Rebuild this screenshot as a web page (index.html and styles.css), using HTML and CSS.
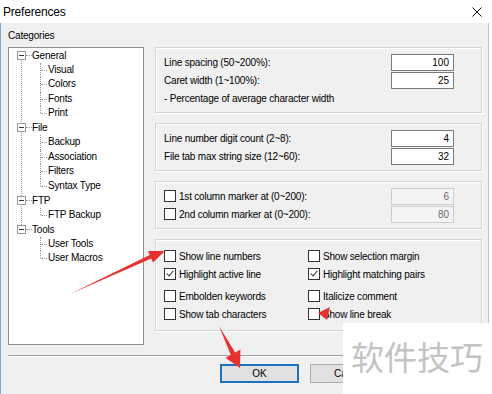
FILE: index.html
```html
<!DOCTYPE html>
<html lang="en">
  <head>
    <meta charset="UTF-8" />
    <title>Preferences</title>
    <link rel="stylesheet" href="styles.css">
  </head>
  <body>
    <div class="window">
      <div class="titlebar">
        <span class="title">Preferences</span>
        <svg class="close" width="10" height="10" viewBox="0 0 10 10">
          <path d="M0.5 0.5 L9.5 9.5 M9.5 0.5 L0.5 9.5" stroke="#111" stroke-width="1" fill="none" />
        </svg>
      </div>

      <div class="dialog">
        <div class="cat-label">Categories</div>
        <div class="main">
          <ul class="tree">
            <li>
              <div class="row"><span class="expander"></span><span>General</span></div>
              <ul class="children">
                <li>Visual</li>
                <li>Colors</li>
                <li>Fonts</li>
                <li>Print</li>
              </ul>
            </li>
            <li>
              <div class="row"><span class="expander"></span><span>File</span></div>
              <ul class="children">
                <li>Backup</li>
                <li>Association</li>
                <li>Filters</li>
                <li>Syntax Type</li>
              </ul>
            </li>
            <li>
              <div class="row"><span class="expander"></span><span>FTP</span></div>
              <ul class="children">
                <li>FTP Backup</li>
              </ul>
            </li>
            <li>
              <div class="row"><span class="expander"></span><span>Tools</span></div>
              <ul class="children">
                <li>User Tools</li>
                <li>User Macros</li>
              </ul>
            </li>
          </ul>

          <div class="options">
            <div class="group">
              <div class="field"><span>Line spacing (50~200%):</span><input class="num" type="text" value="100"></div>
              <div class="field"><span>Caret width (1~100%):</span><input class="num" type="text" value="25"></div>
              <div class="field"><span>- Percentage of average character width</span></div>
            </div>

            <div class="group">
              <div class="field"><span>Line number digit count (2~8):</span><input class="num" type="text" value="4"></div>
              <div class="field"><span>File tab max string size (12~60):</span><input class="num" type="text" value="32"></div>
            </div>

            <div class="group">
              <div class="field"><label class="check"><span class="box"></span>1st column marker at (0~200):</label><input class="num" type="text" value="6" disabled></div>
              <div class="field"><label class="check"><span class="box"></span>2nd column marker at (0~200):</label><input class="num" type="text" value="80" disabled></div>
            </div>

            <div class="group flags">
              <label class="check"><span class="box"></span>Show line numbers</label>
              <label class="check"><span class="box"></span>Show selection margin</label>
              <label class="check"><span class="box checked"></span>Highlight active line</label>
              <label class="check"><span class="box checked"></span>Highlight matching pairs</label>
              <label class="check gap"><span class="box"></span>Embolden keywords</label>
              <label class="check gap"><span class="box"></span>Italicize comment</label>
              <label class="check"><span class="box"></span>Show tab characters</label>
              <label class="check"><span class="box"></span>Show line break</label>
            </div>
          </div>
        </div>

        <div class="separator"></div>

        <div class="buttons">
          <button type="button" class="btn default">OK</button>
          <button type="button" class="btn">Cancel</button>
        </div>
      </div>

      <!-- red annotation arrows drawn over the dialog -->
      <svg class="marks" width="492" height="394" viewBox="0 0 492 394">
        <polygon fill="#e8312f" points="70,294 151.3,258.5 153,262.5 165,251 148,251 149.7,254.9" />
        <polygon fill="#e8312f" points="219,326 230.8,354.9 225.5,357.8 240,368 240.5,349.5 235.2,352.5" />
        <polygon fill="#e8312f" points="318,313 330,307 327,320" />
      </svg>

      <div class="watermark">软件技巧</div>
    </div>
  </body>
</html>
```

FILE: styles.css
```css
body {
  margin: 0;
  background-color: #ffffff;
  font-family: "Liberation Sans", Arial, sans-serif;
  font-size: 10px;
  letter-spacing: -0.2px;
  color: #000000;
}

.window {
  position: relative;
  width: 492px;
  height: 394px;
  overflow: hidden;
}

/* Title bar */
.titlebar {
  height: 23px;
  display: flex;
  align-items: center;
  justify-content: space-between;
  padding: 0 10px 0 3px;
  box-sizing: border-box;
  width: 492px;
}

.title {
  font-size: 12px;
  letter-spacing: -0.2px;
}

.close {
  margin-top: 1px;
}

/* Dialog body */
.dialog {
  width: 489px;
  height: 371px;
  box-sizing: border-box;
  background-color: #f0f0f0;
  border-left: 1px solid #7eaacb;
  border-right: 1px solid #c4c4c4;
  padding: 7px 6px 0 7px;
}

.cat-label {
  line-height: 12px;
  margin-bottom: 5px;
}

.main {
  display: flex;
  gap: 11px;
  height: 298px;
}

/* Category tree */
.tree {
  list-style: none;
  margin: 0;
  padding: 0;
  width: 136px;
  height: 298px;
  box-sizing: border-box;
  background-color: #ffffff;
  border: 1px solid #8e8f8f;
}

.tree ul {
  list-style: none;
  margin: 0;
  padding: 0;
}

.tree > li {
  position: relative;
}

.tree > li::before {
  content: "";
  position: absolute;
  left: 12px;
  top: 7px;
  bottom: -7px;
  border-left: 1px dotted #9a9a9a;
}

.tree > li:last-child::before {
  display: none;
}

.row {
  display: flex;
  align-items: center;
  height: 14.5px;
  padding-left: 8px;
}

.expander {
  position: relative;
  z-index: 1;
  width: 9px;
  height: 9px;
  box-sizing: border-box;
  border: 1px solid #969696;
  background-color: #ffffff;
  margin-right: 6px;
}

.expander::after {
  content: "";
  position: absolute;
  left: 1px;
  top: 3px;
  width: 5px;
  border-top: 1px solid #333333;
}

.expander::before {
  content: "";
  position: absolute;
  left: 8px;
  top: 3px;
  width: 6px;
  border-top: 1px dotted #9a9a9a;
}

.children li {
  position: relative;
  height: 14.5px;
  line-height: 14.5px;
  padding-left: 39px;
}

.children li::before {
  content: "";
  position: absolute;
  left: 31px;
  top: 0;
  height: 100%;
  border-left: 1px dotted #9a9a9a;
}

.children li:last-child::before {
  height: 7px;
}

.children li::after {
  content: "";
  position: absolute;
  left: 32px;
  top: 7px;
  width: 6px;
  border-top: 1px dotted #9a9a9a;
}

/* Option groups */
.options {
  flex: 1;
  display: flex;
  flex-direction: column;
  gap: 10px;
}

.group {
  border: 1px solid #d3d3d3;
  box-shadow: inset 1px 1px 0 #ffffff, 1px 1px 0 #ffffff;
  padding: 5px 27px 5px 8px;
}

.field {
  display: flex;
  align-items: center;
  justify-content: space-between;
  height: 18px;
}

.num {
  width: 63px;
  height: 17px;
  box-sizing: border-box;
  border: 1px solid #7a7a7a;
  background-color: #ffffff;
  padding: 0 4px;
  text-align: right;
  font-family: inherit;
  font-size: 10px;
  color: #000000;
}

.num:disabled {
  background-color: #f4f4f4;
  border-color: #cccccc;
  color: #6d6d6d;
}

.check {
  display: flex;
  align-items: center;
  height: 18px;
}

.box {
  position: relative;
  width: 12px;
  height: 12px;
  box-sizing: border-box;
  border: 1px solid #333333;
  background-color: #ffffff;
  margin-right: 3px;
}

.box.checked::after {
  content: "";
  position: absolute;
  left: 3px;
  top: 0px;
  width: 3px;
  height: 6px;
  border: solid #333333;
  border-width: 0 1px 1px 0;
  transform: rotate(40deg);
}

.flags {
  display: grid;
  grid-template-columns: 144px 1fr;
  padding-top: 7px;
  padding-bottom: 7px;
}

.flags .gap {
  margin-top: 4px;
}

/* Bottom buttons */
.separator {
  margin-top: 10px;
  border-top: 1px solid #a0a0a0;
  border-bottom: 1px solid #ffffff;
}

.buttons {
  display: flex;
  justify-content: flex-end;
  gap: 11px;
  margin-top: 7px;
  padding-right: 93px;
}

.btn {
  width: 79px;
  height: 19px;
  box-sizing: border-box;
  border: 1px solid #adadad;
  background-color: #e1e1e1;
  font-family: inherit;
  font-size: 10px;
  padding: 0;
}

.btn.default {
  border: 2px solid #1d72bd;
}

/* Overlays */
.marks {
  position: absolute;
  top: 0;
  left: 0;
  pointer-events: none;
}

.watermark {
  position: absolute;
  left: 343px;
  top: 323px;
  width: 149px;
  height: 71px;
  background-color: #ffffff;
  color: #c3c3c3;
  font-family: "Noto Sans CJK SC", sans-serif;
  font-size: 33px;
  letter-spacing: 0;
  line-height: 66px;
  padding-left: 8px;
  box-sizing: border-box;
}
```
